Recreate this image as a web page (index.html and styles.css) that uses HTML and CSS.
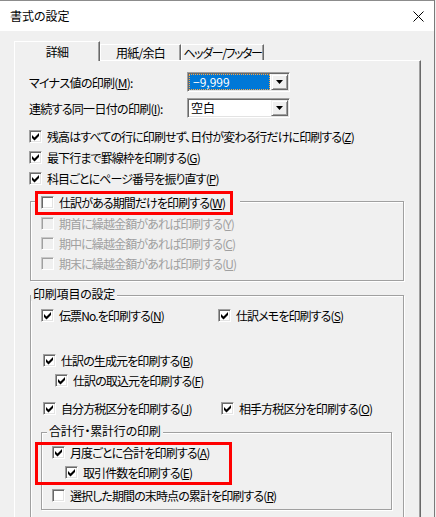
FILE: index.html
```html
<!DOCTYPE html>
<html lang="ja">
  <head>
    <meta charset="UTF-8" />
    <title>書式の設定</title>
    <link rel="stylesheet" href="styles.css">
  </head>
  <body>
    <div class="window">
      <div class="titlebar">
        <span class="title">書式の設定</span>
        <svg class="close" width="11" height="11" viewBox="0 0 11 11">
          <path d="M0.5 0.5 L10.5 10.5 M10.5 0.5 L0.5 10.5" stroke="#000" stroke-width="1" fill="none" />
        </svg>
      </div>

      <div class="main">
        <div class="tabs">
          <div class="tab active tab-1">詳細</div>
          <div class="tab tab-2">用紙/余白</div>
          <div class="tab tab-3">ヘッダー/フッター</div>
        </div>

        <div class="panel">
          <div class="field">
            <label>マイナス値の印刷(<u>M</u>):</label>
            <div class="combo focused">
              <span class="combo-value">−9,999</span>
              <span class="drop"><svg width="7" height="4" viewBox="0 0 7 4"><polygon points="0,0 7,0 3.5,4" fill="#000" /></svg></span>
            </div>
          </div>
          <div class="field">
            <label>連続する同一日付の印刷(<u>I</u>):</label>
            <div class="combo">
              <span class="combo-value">空白</span>
              <span class="drop"><svg width="7" height="4" viewBox="0 0 7 4"><polygon points="0,0 7,0 3.5,4" fill="#000" /></svg></span>
            </div>
          </div>

          <div class="checks-top">
            <div class="check"><span class="box"><svg viewBox="1 1 11 11"><path d="M3 5 L5.5 7.5 L10 3 L10 6 L5.5 10.5 L3 8 Z" /></svg></span><span>残高はすべての行に印刷せず、日付が変わる行だけに印刷する(<u>Z</u>)</span></div>
            <div class="check"><span class="box"><svg viewBox="1 1 11 11"><path d="M3 5 L5.5 7.5 L10 3 L10 6 L5.5 10.5 L3 8 Z" /></svg></span><span>最下行まで罫線枠を印刷する(<u>G</u>)</span></div>
            <div class="check"><span class="box"><svg viewBox="1 1 11 11"><path d="M3 5 L5.5 7.5 L10 3 L10 6 L5.5 10.5 L3 8 Z" /></svg></span><span>科目ごとにページ番号を振り直す(<u>P</u>)</span></div>
          </div>

          <div class="group group-period">
            <div class="check legend-check"><span class="box"></span><span>仕訳がある期間だけを印刷する(<u>W</u>)</span></div>
            <div class="period-rows">
              <div class="check disabled"><span class="box"></span><span>期首に繰越金額があれば印刷する(<u>Y</u>)</span></div>
              <div class="check disabled"><span class="box"></span><span>期中に繰越金額があれば印刷する(<u>C</u>)</span></div>
              <div class="check disabled"><span class="box"></span><span>期末に繰越金額があれば印刷する(<u>U</u>)</span></div>
            </div>
            <div class="mark mark-period"></div>
          </div>

          <div class="group group-items">
            <div class="legend">印刷項目の設定</div>

            <div class="pair pair-first">
              <div class="check"><span class="box"><svg viewBox="1 1 11 11"><path d="M3 5 L5.5 7.5 L10 3 L10 6 L5.5 10.5 L3 8 Z" /></svg></span><span>伝票No.を印刷する(<u>N</u>)</span></div>
              <div class="check"><span class="box"><svg viewBox="1 1 11 11"><path d="M3 5 L5.5 7.5 L10 3 L10 6 L5.5 10.5 L3 8 Z" /></svg></span><span>仕訳メモを印刷する(<u>S</u>)</span></div>
            </div>

            <div class="check source"><span class="box"><svg viewBox="1 1 11 11"><path d="M3 5 L5.5 7.5 L10 3 L10 6 L5.5 10.5 L3 8 Z" /></svg></span><span>仕訳の生成元を印刷する(<u>B</u>)</span></div>
            <div class="check import"><span class="box"><svg viewBox="1 1 11 11"><path d="M3 5 L5.5 7.5 L10 3 L10 6 L5.5 10.5 L3 8 Z" /></svg></span><span>仕訳の取込元を印刷する(<u>F</u>)</span></div>

            <div class="pair pair-tax">
              <div class="check"><span class="box"><svg viewBox="1 1 11 11"><path d="M3 5 L5.5 7.5 L10 3 L10 6 L5.5 10.5 L3 8 Z" /></svg></span><span>自分方税区分を印刷する(<u>J</u>)</span></div>
              <div class="check"><span class="box"><svg viewBox="1 1 11 11"><path d="M3 5 L5.5 7.5 L10 3 L10 6 L5.5 10.5 L3 8 Z" /></svg></span><span>相手方税区分を印刷する(<u>O</u>)</span></div>
            </div>

            <div class="group group-total">
              <div class="legend">合計行・累計行の印刷</div>
              <div class="check monthly"><span class="box"><svg viewBox="1 1 11 11"><path d="M3 5 L5.5 7.5 L10 3 L10 6 L5.5 10.5 L3 8 Z" /></svg></span><span>月度ごとに合計を印刷する(<u>A</u>)</span></div>
              <div class="check count"><span class="box"><svg viewBox="1 1 11 11"><path d="M3 5 L5.5 7.5 L10 3 L10 6 L5.5 10.5 L3 8 Z" /></svg></span><span>取引件数を印刷する(<u>E</u>)</span></div>
              <div class="check cumulative"><span class="box"></span><span>選択した期間の末時点の累計を印刷する(<u>R</u>)</span></div>
              <div class="mark mark-total"></div>
            </div>
          </div>
        </div>
      </div>
    </div>
  </body>
</html>
```

FILE: styles.css
```css
* {
  box-sizing: border-box;
}

body {
  margin: 0;
  background: #f0f0f0;
  color: #000;
  font-family: "Noto Sans CJK JP", sans-serif;
  font-size: 12px;
  font-feature-settings: "palt";
  letter-spacing: -0.7px;
  overflow: hidden;
}

u {
  text-decoration: underline;
  text-underline-offset: 1px;
}

.window {
  position: relative;
  width: 435px;
  height: 517px;
  border-right: 1px solid #7a7a7a;
  overflow: hidden;
}

/* title bar */
.titlebar {
  height: 31px;
  border-top: 1px solid #8c8c8c;
  background: #fff;
  display: flex;
  align-items: center;
  justify-content: space-between;
  padding: 0 10px 0 10px;
}

.title {
  font-size: 12px;
  line-height: 16px;
  letter-spacing: 0;
}

.close {
  display: block;
}

/* tabs */
.main {
  padding: 10px 0 0 14px;
}

.tabs {
  display: flex;
  align-items: flex-end;
  height: 19px;
}

.tab {
  height: 16px;
  line-height: 15px;
  text-align: center;
  white-space: nowrap;
  border-top: 1px solid #fff;
  border-left: 1px solid #fff;
  border-right: 1px solid #696969;
  box-shadow: inset -1px 0 0 #a0a0a0;
  background: #f0f0f0;
}

.tab.active {
  position: relative;
  z-index: 1;
  height: 20px;
  line-height: 19px;
  margin-bottom: -1px;
}

.tab-1 { width: 86px; }
.tab-2 { width: 81px; }
.tab-3 { width: 83px; letter-spacing: -1.4px; }

.panel {
  width: 407px;
  height: 470px;
  border-top: 1px solid #fff;
  border-left: 1px solid #fff;
  border-right: 1px solid #696969;
  box-shadow: inset -1px 0 0 #a0a0a0;
  padding: 11px 14px 0 14px;
}

/* combo boxes */
.field {
  display: flex;
  align-items: center;
  height: 20px;
}

.field + .field {
  margin-top: 6px;
}

.field label {
  width: 158px;
}

.combo {
  display: flex;
  width: 103px;
  height: 20px;
  padding: 1px;
  border: 1px solid;
  border-color: #a0a0a0 #fff #fff #a0a0a0;
  box-shadow: inset 1px 1px 0 #696969, inset -1px -1px 0 #e3e3e3;
  background: #fff;
}

.combo-value {
  flex: 1;
  height: 16px;
  line-height: 16px;
  padding-left: 2px;
  margin-right: 1px;
  letter-spacing: 0;
}

.focused .combo-value {
  background: #0078d7;
  color: #fff;
  padding-left: 4px;
  outline: 1px dotted #ffa640;
  outline-offset: -1px;
}

.drop {
  display: flex;
  align-items: center;
  justify-content: center;
  width: 17px;
  height: 16px;
  border: 1px solid;
  border-color: #f0f0f0 #696969 #696969 #f0f0f0;
  box-shadow: inset 1px 1px 0 #fff, inset -1px -1px 0 #a0a0a0;
  background: #f0f0f0;
}

.drop svg {
  display: block;
}

/* checkboxes */
.check {
  display: flex;
  align-items: center;
  gap: 5px;
  height: 20px;
  white-space: nowrap;
  letter-spacing: -0.9px;
}

.box {
  flex: none;
  width: 13px;
  height: 13px;
  border: 1px solid;
  border-color: #a0a0a0 #fff #fff #a0a0a0;
  box-shadow: inset 1px 1px 0 #696969, inset -1px -1px 0 #e3e3e3;
  background: #fff;
}

.box svg {
  display: block;
  width: 11px;
  height: 11px;
  fill: #000;
}

.check.disabled {
  color: #a0a0a0;
}

.check.disabled .box {
  background: #f0f0f0;
  border-color: #c8c8c8 #fff #fff #c8c8c8;
  box-shadow: inset 1px 1px 0 #a0a0a0, inset -1px -1px 0 #f0f0f0;
}

.checks-top {
  margin-top: 8px;
}

.checks-top .check + .check {
  margin-top: 1px;
}

/* group boxes */
.group {
  position: relative;
  border: 1px solid #a0a0a0;
  box-shadow: 1px 1px 0 #fff, inset 1px 1px 0 #fff;
}

.legend {
  width: max-content;
  margin: -9px 0 0 -10px;
  padding: 0 2px;
  line-height: 14px;
  letter-spacing: -0.2px;
  background: #f0f0f0;
}

.group-period {
  width: 374px;
  margin: 13px 0 0 1px;
  padding: 0 0 7px 10px;
}

.legend-check {
  width: 204px;
  margin: -10px 0 0 -5px;
  padding-left: 5px;
  background: #f0f0f0;
}

.period-rows {
  margin-top: 1px;
}

.group-items {
  width: 374px;
  margin: 14px 0 0 1px;
  padding: 0 0 20px 10px;
}

.pair {
  display: grid;
}

.pair-first {
  grid-template-columns: 177px auto;
  margin-top: 4px;
}

.check.source {
  margin-top: 25px;
  padding-left: 2px;
}

.check.import {
  padding-left: 14px;
}

.pair-tax {
  grid-template-columns: 178px auto;
  margin-top: 8px;
  padding-left: 2px;
}

.group-total {
  width: 351px;
  margin-top: 14px;
  padding: 0 0 4px 10px;
}

.group-total .legend {
  margin-left: -5px;
}

.check.monthly {
  margin-top: 4px;
}

.check.count {
  padding-left: 13px;
}

.check.cumulative {
  margin-top: 3px;
}

/* red highlight marks drawn over the dialog */
.mark {
  position: absolute;
  border: 3px solid #ff0000;
}

.mark-period {
  left: 4px;
  top: -11px;
  width: 198px;
  height: 24px;
}

.mark-total {
  left: -7px;
  top: 9px;
  width: 197px;
  height: 43px;
}
```
